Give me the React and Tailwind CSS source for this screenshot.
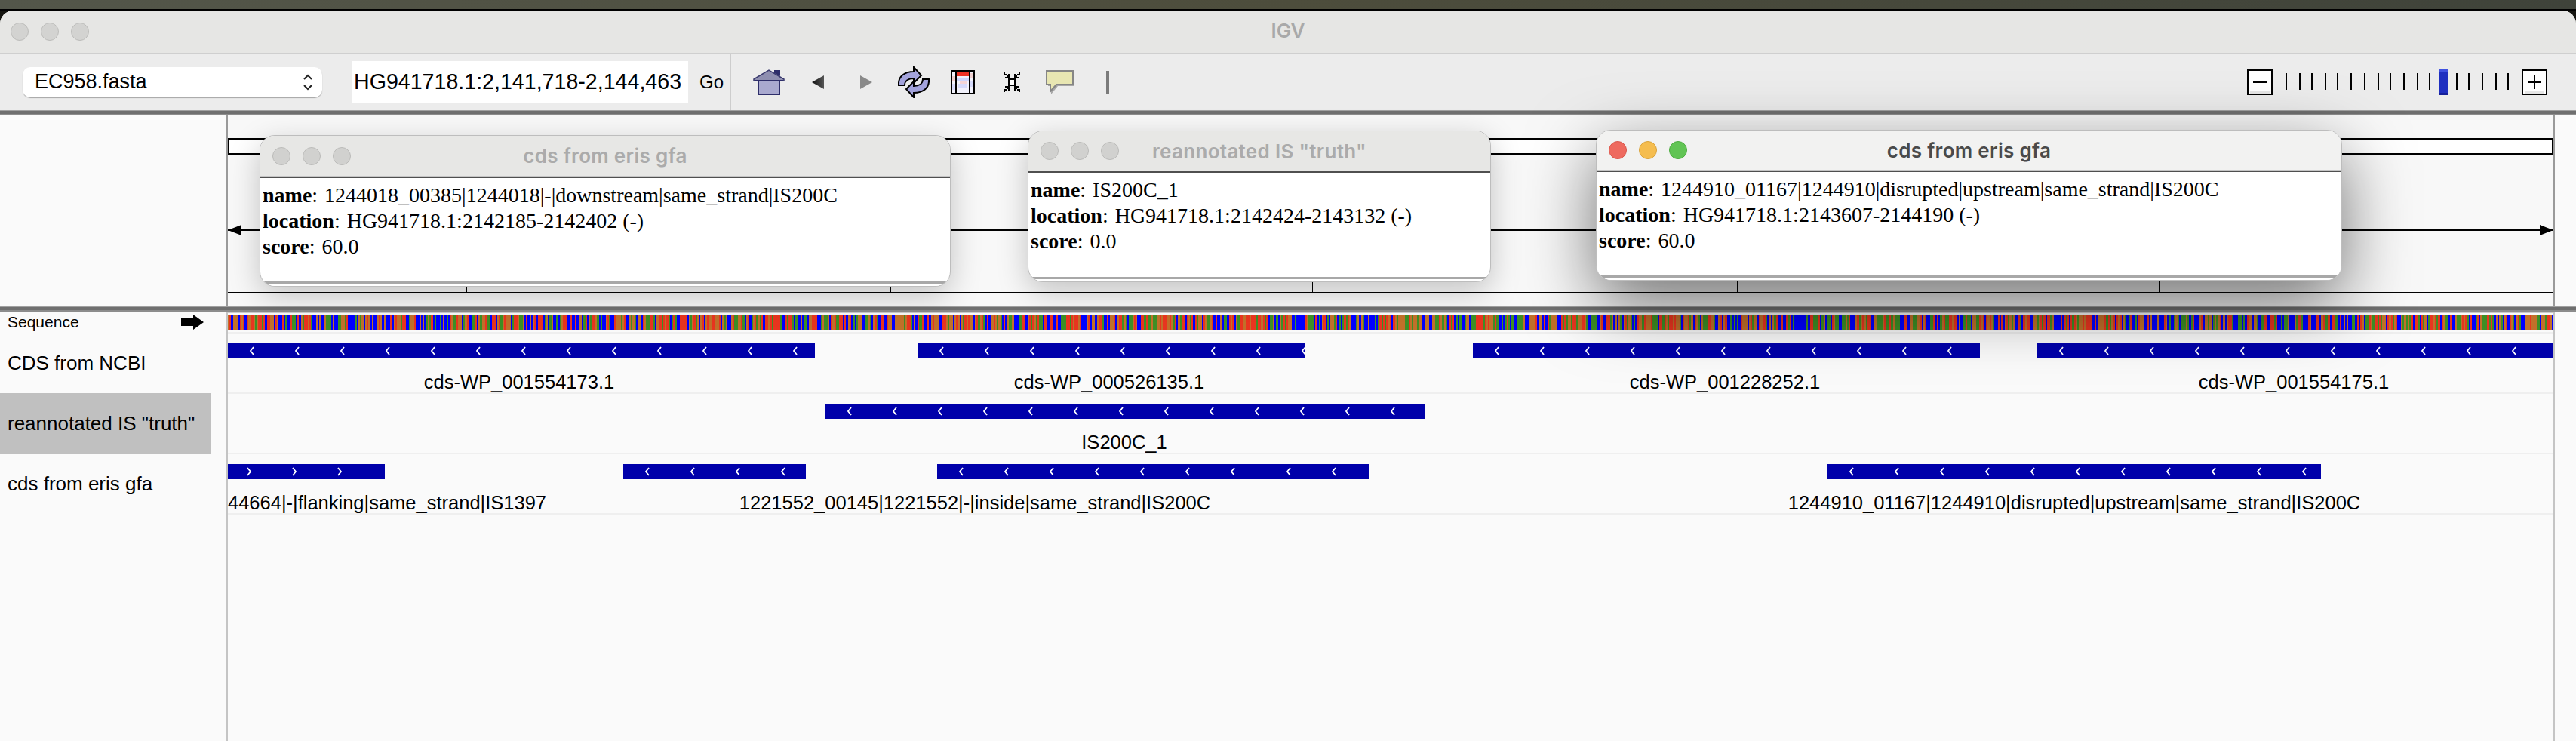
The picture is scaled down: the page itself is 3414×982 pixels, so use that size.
const tracks = [
  {
    features: [
      { x: 302, end: 1080, dir: 'l' },
      { x: 1216, end: 1730, dir: 'l' },
      { x: 1952, end: 2624, dir: 'l' },
      { x: 2700, end: 3384, dir: 'l' },
    ],
    labels: [
      { text: 'cds-WP_001554173.1', center: 688 },
      { text: 'cds-WP_000526135.1', center: 1470 },
      { text: 'cds-WP_001228252.1', center: 2286 },
      { text: 'cds-WP_001554175.1', center: 3040 },
    ],
  },
  {
    features: [{ x: 1094, end: 1888, dir: 'l' }],
    labels: [{ text: 'IS200C_1', center: 1490 }],
  },
  {
    features: [
      { x: 302, end: 510, dir: 'r' },
      { x: 826, end: 1068, dir: 'l' },
      { x: 1242, end: 1814, dir: 'l', marks: [32, 92, 152, 212, 272, 332, 392, 466, 526] },
      { x: 2422, end: 3076, dir: 'l' },
    ],
    labels: [
      { text: '1221552_00145|1221552|-|inside|same_strand|IS200C', center: 1292 },
      { text: '1244910_01167|1244910|disrupted|upstream|same_strand|IS200C', center: 2749 },
    ],
    clipped: '44664|-|flanking|same_strand|IS1397',
  },
];

// fake bases, only the look of the strip matters
function makeBases(n) {
  let s = 1244018;
  const colors = ['#e8351f', '#c1702a', '#3d8f25', '#0000ff'];
  const out = [];
  for (let i = 0; i < n; i++) {
    s = (s + 0x6d2b79f5) | 0;
    let t = Math.imul(s ^ (s >>> 15), 1 | s);
    t = (t + Math.imul(t ^ (t >>> 7), 61 | t)) ^ t;
    const r = ((t ^ (t >>> 14)) >>> 0) / 4294967296;
    out.push(colors[Math.floor(r * 4)]);
  }
  return out;
}

const bases = makeBases(1373);

function SequenceStrip() {
  const step = 3082 / 1373;
  return (
    <svg width="3082" height="20" className="block" shapeRendering="crispEdges">
      {bases.map((c, i) => (
        <rect key={i} x={i * step} y="0" width={step + 0.3} height="20" fill={c} />
      ))}
    </svg>
  );
}

function Chevron({ dir, x }) {
  return (
    <svg width="8" height="12" viewBox="0 0 8 12" className="absolute top-[4px]" style={{ left: x - 4 }}>
      <path
        d={dir === 'l' ? 'M6 1 L2 6 L6 11' : 'M2 1 L6 6 L2 11'}
        fill="none"
        stroke="#ffffff"
        strokeWidth="1.8"
      />
    </svg>
  );
}

function Feature({ f }) {
  const width = f.end - f.x;
  let marks = f.marks;
  if (!marks) {
    marks = [];
    for (let m = f.dir === 'l' ? 32 : 28; m < width; m += 60) marks.push(m);
  }
  return (
    <div
      className="absolute top-[13px] h-[20px] bg-[#0000aa] overflow-hidden"
      style={{ left: f.x - 302, width }}
    >
      {marks.map((m) => (
        <Chevron key={m} dir={f.dir} x={m} />
      ))}
    </div>
  );
}

function Track({ track }) {
  return (
    <div className="relative h-[78px] overflow-hidden border-b-0">
      {track.features.map((f) => (
        <Feature key={f.x} f={f} />
      ))}
      {track.clipped && (
        <span className="absolute left-0 top-[49px] leading-[30px] whitespace-nowrap text-[25.5px] text-black">
          {track.clipped}
        </span>
      )}
      {track.labels.map((l) => (
        <span
          key={l.text}
          className="absolute top-[49px] leading-[30px] whitespace-nowrap text-[25.5px] text-black -translate-x-1/2"
          style={{ left: l.center - 302 }}
        >
          {l.text}
        </span>
      ))}
    </div>
  );
}

function Lights({ active, gap }) {
  const colors = active
    ? ['bg-[#ee6a5f] border-[#d8574c]', 'bg-[#f5bd4f] border-[#d9a33c]', 'bg-[#61c454] border-[#4ead42]']
    : ['bg-[#d1d1cf] border-[#bbbbb9]', 'bg-[#d1d1cf] border-[#bbbbb9]', 'bg-[#d1d1cf] border-[#bbbbb9]'];
  return (
    <div className={`absolute left-[16px] flex ${gap}`}>
      {colors.map((c, i) => (
        <div key={i} className={`w-[24px] h-[24px] rounded-full border ${c}`} />
      ))}
    </div>
  );
}

function Popup({ className, titleH, active, title, name, location, score }) {
  return (
    <div
      className={`absolute flex flex-col rounded-[20px] overflow-hidden bg-white border border-[#bdbdbd] ${className}`}
    >
      <div
        className={`relative flex items-center justify-center shrink-0 ${titleH} ${
          active ? 'bg-[#f2f2f1]' : 'bg-[#e7e7e5]'
        }`}
      >
        <Lights active={active} gap="gap-[16px]" />
        <span
          className={`font-['Inter',sans-serif] font-semibold text-[26px] tracking-[0.3px] ${
            active ? 'text-[#4a4a4a]' : 'text-[#ababab]'
          }`}
        >
          {title}
        </span>
      </div>
      <div className="h-[1px] bg-[#c4c4c4] shrink-0" />
      <div className="h-[2px] bg-[#4f4f4f] shrink-0" />
      <div className="flex-1 pl-[3px] pt-[6px] font-['Liberation_Serif',serif] text-[28px] leading-[34px] text-black whitespace-nowrap">
        <div>
          <b>name</b>: <span className="ml-[2px]">{name}</span>
        </div>
        <div>
          <b>location</b>: <span className="ml-[2px]">{location}</span>
        </div>
        <div>
          <b>score</b>: <span className="ml-[2px]">{score}</span>
        </div>
      </div>
      <div className="h-[3px] bg-[#a8a8a8] shrink-0" />
      <div className="h-[3px] bg-white shrink-0" />
    </div>
  );
}

function HomeIcon() {
  return (
    <svg width="42" height="34" viewBox="0 0 42 34" className="ml-[29px]">
      <path d="M28 1 H36 V9 L28 5 Z" fill="#2e2e6a" />
      <rect x="7" y="13" width="28" height="20" fill="#a9a9cf" stroke="#2e2e6a" strokeWidth="2" />
      <path d="M1 13 L21 1 L41 13 V15 H1 Z" fill="#8f8fb0" stroke="#3a3a6e" strokeWidth="1.5" />
      <path d="M2 15 H40" stroke="#2e2e6a" strokeWidth="2" />
    </svg>
  );
}

function RefreshIcon() {
  return (
    <svg width="42" height="42" viewBox="0 0 42 42" className="ml-[34px]">
      <path
        d="M1 25 C0 13 9 7 21 7 V1 L31 12 L21 22 V16 C14 16 9 19 9 25 Z"
        fill="#a3a3dc"
        stroke="#000"
        strokeWidth="2"
      />
      <path
        d="M41 17 C42 29 33 35 21 35 V41 L11 30 L21 20 V26 C28 26 33 23 33 17 Z"
        fill="#a3a3dc"
        stroke="#000"
        strokeWidth="2"
      />
    </svg>
  );
}

function RegionIcon() {
  return (
    <svg width="32" height="32" viewBox="0 0 32 32" className="ml-[28px]" shapeRendering="crispEdges">
      <rect x="1" y="1" width="30" height="30" fill="#f1f1fb" stroke="#000" strokeWidth="2" />
      <rect x="8" y="10" width="16" height="4" fill="#cfd6fb" />
      <rect x="12" y="14" width="10" height="4" fill="#f5d5d5" />
      <rect x="10" y="18" width="12" height="5" fill="#d6dafb" />
      <rect x="2" y="8" width="4" height="6" fill="#f0d0d0" />
      <rect x="2" y="18" width="4" height="8" fill="#d6dafb" />
      <rect x="26" y="4" width="4" height="6" fill="#eed0d0" />
      <rect x="26" y="14" width="4" height="8" fill="#d6dafb" />
      <rect x="8" y="2" width="16" height="6" fill="#ee3124" />
      <rect x="6" y="2" width="2" height="28" fill="#000" />
      <rect x="24" y="2" width="2" height="28" fill="#000" />
    </svg>
  );
}

function FitIcon() {
  return (
    <svg width="26" height="26" viewBox="0 0 26 26" className="ml-[36px]" shapeRendering="crispEdges">
      <rect x="9" y="9" width="8" height="8" fill="#fff" stroke="#000" strokeWidth="2" />
      <path d="M2 0 H4 V2 H6 V4 H8 V2 H10 V8 H4 V6 H6 V4 H2 Z" fill="#000" />
      <path d="M24 0 H22 V2 H20 V4 H18 V2 H16 V8 H22 V6 H20 V4 H24 Z" fill="#000" />
      <path d="M2 26 H4 V24 H6 V22 H8 V24 H10 V18 H4 V20 H6 V22 H2 Z" fill="#000" />
      <path d="M24 26 H22 V24 H20 V22 H18 V24 H16 V18 H22 V20 H20 V22 H24 Z" fill="#000" />
    </svg>
  );
}

function CommentIcon() {
  return (
    <svg width="38" height="32" viewBox="0 0 38 32" className="ml-[32px]">
      <path d="M3 3 H38 V21 H16 L7 32 V21 H3 Z" fill="#a8a8a8" />
      <path d="M1 1 H36 V19 H14 L6 28 V19 H1 Z" fill="#e8e6b2" stroke="#868686" strokeWidth="2" />
    </svg>
  );
}

function ZoomButton({ plus }) {
  return (
    <div className="relative w-[34px] h-[34px] border-2 border-black bg-white">
      <div className="absolute inset-x-[2px] bottom-0 h-[3px] bg-[#e6e6e6]" />
      <div className="absolute left-[6px] top-[14px] w-[18px] h-[2px] bg-black" />
      {plus && <div className="absolute left-[14px] top-[6px] w-[2px] h-[18px] bg-black" />}
    </div>
  );
}

function ZoomSlider() {
  const ticks = [3030, 3048, 3064, 3082, 3098, 3116, 3134, 3152, 3168, 3186, 3204, 3220, 3256, 3272, 3290, 3308, 3324];
  return (
    <svg width="330" height="34" viewBox="3012 90 330 34" shapeRendering="crispEdges">
      {ticks.map((t) => (
        <rect key={t} x={t - 1} y="95" width="2" height="22" fill="#000" />
      ))}
      <rect x="3232" y="90" width="12" height="34" fill="#1f2fc0" />
      <rect x="3232" y="90" width="12" height="3" fill="#3f51e0" />
      <rect x="3232" y="121" width="12" height="3" fill="#16219a" />
    </svg>
  );
}

function HeavyLine() {
  return (
    <div className="shrink-0">
      <div className="h-[1px] bg-[#a0a0a0]" />
      <div className="h-[4px] bg-[#6f6f6f]" />
      <div className="h-[2px] bg-[#8c8c8c]" />
    </div>
  );
}

export default function App() {
  return (
    <div className="relative w-[3414px] h-[982px] overflow-hidden bg-[#14140f] font-['Liberation_Sans',sans-serif]">
      <div className="h-[12px] bg-gradient-to-r from-[#53564a] via-[#4d4d3c] to-[#3f433a]" />
      <div className="h-[2px] bg-black" />

      <div className="flex flex-col h-[968px] rounded-t-[18px] overflow-hidden bg-[#fafafa]">
        {/* title bar */}
        <div className="relative h-[56px] bg-[#e6e6e4] flex items-center justify-center shrink-0">
          <div className="absolute left-[14px] top-[16px] flex gap-[16px]">
            <div className="w-[24px] h-[24px] rounded-full bg-[#d3d3d1] border border-[#bcbcba]" />
            <div className="w-[24px] h-[24px] rounded-full bg-[#d3d3d1] border border-[#bcbcba]" />
            <div className="w-[24px] h-[24px] rounded-full bg-[#d3d3d1] border border-[#bcbcba]" />
          </div>
          <span className="font-['Inter',sans-serif] font-semibold text-[26px] text-[#a9a9a9] translate-y-[-2px]">
            IGV
          </span>
        </div>
        <div className="h-[1px] bg-[#cfcfcf] shrink-0" />

        {/* toolbar */}
        <div className="flex items-center h-[75px] bg-[#ececec] shrink-0 pr-[38px]">
          <div className="ml-[30px] w-[397px] h-[40px] rounded-[10px] bg-white shadow-[0_1px_1px_rgba(0,0,0,0.3)] flex items-center justify-between pl-[16px] pr-[12px]">
            <span className="text-[27px] leading-none text-black">EC958.fasta</span>
            <svg width="14" height="22" viewBox="0 0 14 22" fill="none" stroke="#222" strokeWidth="2">
              <path d="M2 7 L7 2 L12 7" />
              <path d="M2 15 L7 20 L12 15" />
            </svg>
          </div>
          <div className="ml-[40px] w-[445px] h-[56px] bg-white border-b border-[#cccccc] flex items-center pl-[2px]">
            <span className="text-[28.6px] leading-none text-black whitespace-nowrap">HG941718.1:2,141,718-2,144,463</span>
          </div>
          <span className="ml-[15px] w-[31px] text-[24px] text-black">Go</span>
          <div className="ml-[9px] w-[2px] self-stretch bg-[#cdcdcd]" />
          <HomeIcon />
          <svg width="16" height="18" viewBox="0 0 16 18" className="ml-[36px]">
            <defs>
              <linearGradient id="leftArrow" x1="0" x2="1" y1="0" y2="0">
                <stop offset="0" stopColor="#111" />
                <stop offset="1" stopColor="#555" />
              </linearGradient>
            </defs>
            <path d="M16 0 V18 L0 9 Z" fill="url(#leftArrow)" />
          </svg>
          <svg width="16" height="18" viewBox="0 0 16 18" className="ml-[48px]">
            <path d="M0 0 V18 L16 9 Z" fill="#8a8a8a" />
          </svg>
          <RefreshIcon />
          <RegionIcon />
          <FitIcon />
          <CommentIcon />
          <div className="ml-[42px] w-[4px] h-[30px] bg-[#7b7b7b]" />
          <div className="ml-auto flex items-center">
            <ZoomButton />
            <ZoomSlider />
            <ZoomButton plus />
          </div>
        </div>
        <HeavyLine />

        {/* ruler panel */}
        <div className="flex h-[253px] shrink-0">
          <div className="w-[300px] bg-[#fafafa]" />
          <div className="w-[2px] bg-[#9a9a9a]" />
          <div className="w-[3082px] bg-[#f8f8f8] flex flex-col">
            <div className="h-[30px]" />
            <div className="h-[22px] border-2 border-black bg-white" />
            <div className="h-[99px]" />
            <div className="relative h-[2px] bg-black">
              <svg width="18" height="14" viewBox="0 0 18 14" className="absolute left-0 top-[-6px]">
                <path d="M0 7 L18 0 V14 Z" fill="#000" />
              </svg>
              <svg width="18" height="14" viewBox="0 0 18 14" className="absolute right-0 top-[-6px]">
                <path d="M18 7 L0 0 V14 Z" fill="#000" />
              </svg>
            </div>
            <div className="relative h-[81px]">
              <div className="absolute left-[316px] bottom-0 w-[1px] h-[15px] bg-black" />
              <div className="absolute left-[878px] bottom-0 w-[1px] h-[15px] bg-black" />
              <div className="absolute left-[1437px] bottom-0 w-[1px] h-[15px] bg-black" />
              <div className="absolute left-[2000px] bottom-0 w-[1px] h-[15px] bg-black" />
              <div className="absolute left-[2560px] bottom-0 w-[1px] h-[15px] bg-black" />
            </div>
            <div className="h-[1px] bg-black" />
          </div>
          <div className="w-[2px] bg-[#9a9a9a]" />
          <div className="flex-1 bg-[#fafafa]" />
        </div>
        <HeavyLine />

        {/* data panel */}
        <div className="flex flex-1">
          <div className="w-[300px] text-black">
            <div className="relative h-[28px] flex items-center pl-[10px] text-[21px]">
              <span>Sequence</span>
              <svg width="30" height="20" viewBox="0 0 30 20" className="absolute left-[240px] top-[4px]">
                <path d="M0 5 H16 V0 L30 10 L16 20 V15 H0 Z" fill="#000" />
              </svg>
            </div>
            <div className="h-[80px] flex items-center pl-[10px] text-[26px]">CDS from NCBI</div>
            <div className="h-[80px] w-[280px] flex items-center pl-[10px] text-[26px] bg-[#c0c0c0]">
              reannotated IS "truth"
            </div>
            <div className="h-[80px] flex items-center pl-[10px] text-[26px]">cds from eris gfa</div>
          </div>
          <div className="w-[2px] bg-[#c4c4c4]" />
          <div className="w-[3082px]">
            <div className="h-[4px] pt-0">
              <div className="h-[2px] bg-[#cccccc]" />
            </div>
            <SequenceStrip />
            <div className="h-[3px]" />
            <div className="h-[2px] bg-[#efefef]" />
            {tracks.map((t, i) => (
              <div key={i}>
                <Track track={t} />
                <div className="h-[2px] bg-[#efefef]" />
              </div>
            ))}
          </div>
          <div className="w-[2px] bg-[#c4c4c4]" />
          <div className="flex-1" />
        </div>
      </div>

      {/* popup windows */}
      <Popup
        className="left-[344px] top-[179px] w-[916px] h-[201px] shadow-[0_12px_40px_rgba(0,0,0,0.22)]"
        titleH="h-[53px]"
        title="cds from eris gfa"
        name="1244018_00385|1244018|-|downstream|same_strand|IS200C"
        location="HG941718.1:2142185-2142402 (-)"
        score="60.0"
      />
      <Popup
        className="left-[1362px] top-[173px] w-[614px] h-[201px] shadow-[0_12px_40px_rgba(0,0,0,0.22)]"
        titleH="h-[52px]"
        title={'reannotated IS "truth"'}
        name="IS200C_1"
        location="HG941718.1:2142424-2143132 (-)"
        score="0.0"
      />
      <Popup
        className="left-[2115px] top-[172px] w-[989px] h-[200px] shadow-[0_30px_90px_rgba(0,0,0,0.55)]"
        titleH="h-[52px]"
        active
        title="cds from eris gfa"
        name="1244910_01167|1244910|disrupted|upstream|same_strand|IS200C"
        location="HG941718.1:2143607-2144190 (-)"
        score="60.0"
      />
    </div>
  );
}
